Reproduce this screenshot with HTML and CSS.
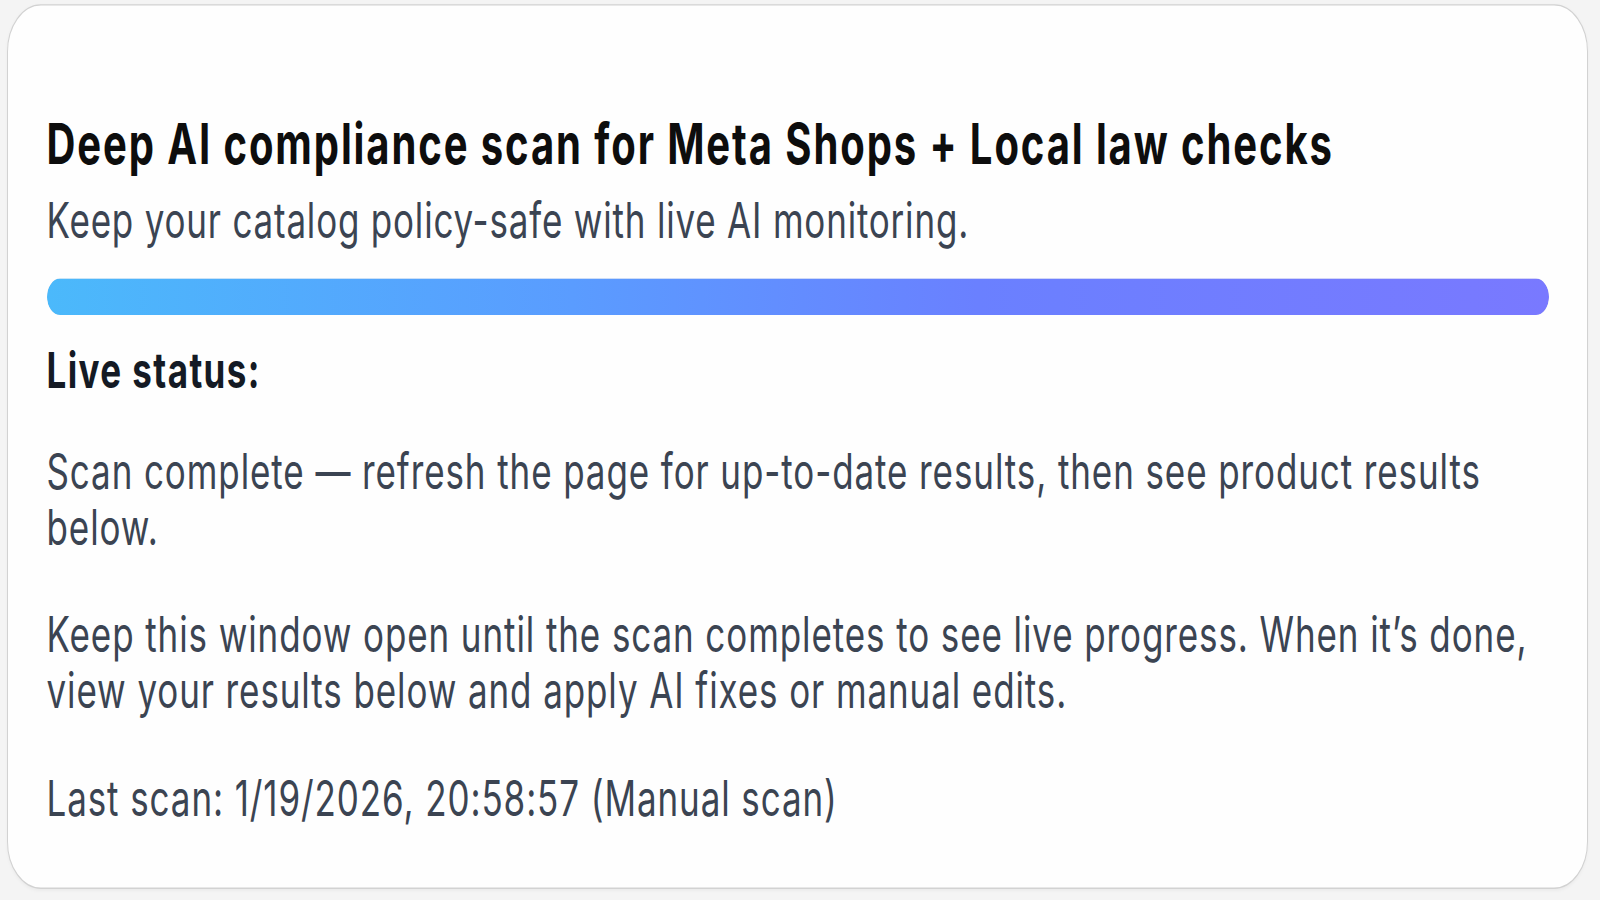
FILE: index.html
```html
<!DOCTYPE html>
<html lang="en">
<head>
<meta charset="utf-8">
<title>Deep AI compliance scan</title>
<link rel="stylesheet" href="styles.css">
</head>
<body>
<div class="stage">
  <section class="card">
    <h1 class="title">Deep AI compliance scan for Meta Shops + Local law checks</h1>
    <p class="subtitle">Keep your catalog policy-safe with live AI monitoring.</p>
    <div class="progress"><div class="progress-fill" style="width:100%"></div></div>
    <h2 class="status-label">Live status:</h2>
    <p class="para para-first">Scan complete — refresh the page for up-to-date results, then see product results below.</p>
    <p class="para">Keep this window open until the scan completes to see live progress. When it’s done, view your results below and apply AI fixes or manual edits.</p>
    <p class="para">Last scan: 1/19/2026, 20:58:57 (Manual scan)</p>
  </section>
</div>
</body>
</html>
```

FILE: styles.css
```css
html, body {
  margin: 0;
  padding: 0;
  background: #f4f4f4;
  height: 900px;
  overflow: hidden;
}

.stage {
  width: 1600px;
  height: 643px;
  box-sizing: border-box;
  padding: 3px 12px 0 7px;
  transform: scaleY(1.4);
  transform-origin: 0 0;
  font-family: Inter, "Noto Sans", sans-serif;
}

.card {
  box-sizing: border-box;
  width: 1581px;
  height: 632px;
  background: #fefefe;
  border: 1.5px solid #d2d2d2;
  border-radius: 34px;
  padding: 75px 38px 0 38.5px;
  box-shadow: 0 1px 3px rgba(0, 0, 0, 0.04);
}

.title {
  margin: 0;
  font-size: 40px;
  line-height: 48px;
  font-weight: 700;
  color: #0d0d0d;
  letter-spacing: 1.9px;
}

.subtitle {
  margin: 9px 0 0;
  font-size: 35px;
  line-height: 42px;
  font-weight: 400;
  color: #3b4452;
  letter-spacing: 0.8px;
}

.progress {
  margin-top: 20.7px;
  height: 26px;
  border-radius: 13px;
  background: #e5e7eb;
  overflow: hidden;
}

.progress-fill {
  height: 100%;
  border-radius: 13px;
  background: linear-gradient(90deg, #4bb9fb 0%, #5a9cff 35%, #6a80ff 62%, #7979ff 100%);
}

.status-label {
  margin: 18.3px 0 0;
  font-size: 35px;
  line-height: 42px;
  font-weight: 700;
  color: #141a24;
  letter-spacing: 1.4px;
}

.para {
  margin: 36px 0 0;
  font-size: 35px;
  line-height: 40.5px;
  font-weight: 400;
  color: #3b4452;
  letter-spacing: 0.9px;
}

.para-first {
  margin-top: 30.7px;
}
```
